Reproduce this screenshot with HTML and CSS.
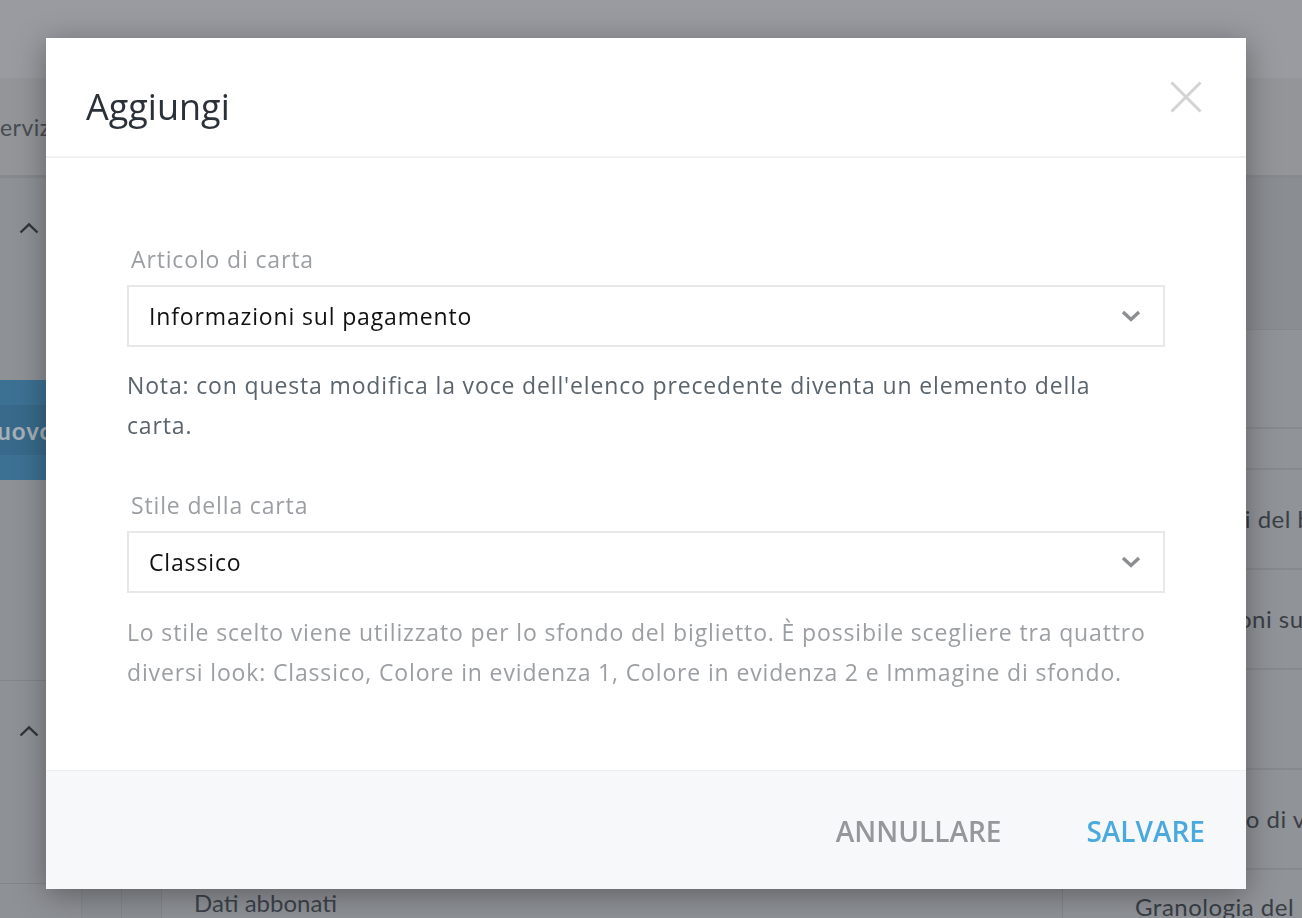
FILE: index.html
```html
<!DOCTYPE html>
<html lang="it">
<head>
<meta charset="utf-8">
<title>Aggiungi</title>
<link rel="stylesheet" href="styles.css">
</head>
<body>
<div class="page">
  <header class="topbar"></header>
  <nav class="subbar"><span class="tab">Servizi</span></nav>
  <div class="content">
    <aside class="sidebar">
      <section class="side-sec first">
        <div class="side-head">
          <svg class="chev-up" width="20" height="12" viewBox="0 0 20 12"><path d="M1.5 10.5 L10 2.5 L18.5 10.5" fill="none" stroke="#30353c" stroke-width="2.4"/></svg>
        </div>
        <div class="new-btn">Nuovo</div>
      </section>
      <section class="side-sec second">
        <div class="side-head">
          <svg class="chev-up" width="20" height="12" viewBox="0 0 20 12"><path d="M1.5 10.5 L10 2.5 L18.5 10.5" fill="none" stroke="#30353c" stroke-width="2.4"/></svg>
        </div>
      </section>
    </aside>
    <main class="center">
      <div class="table-row">
        <div class="cell narrow"></div>
        <div class="cell narrow"></div>
        <div class="cell text">Dati abbonati</div>
      </div>
    </main>
    <aside class="rightpanel">
      <div class="rp-head"></div>
      <div class="rp-row tall"></div>
      <div class="rp-row short"></div>
      <div class="rp-row indent-a">Documenti del biglietto</div>
      <div class="rp-row">Informazioni sul pagamento</div>
      <div class="rp-row"></div>
      <div class="rp-row indent-b">Documento di viaggio</div>
      <div class="rp-row last">Granologia del biglietto</div>
    </aside>
  </div>
</div>

<div class="modal">
  <div class="modal-header">
    <h2 class="modal-title">Aggiungi</h2>
    <button class="close-btn" aria-label="Chiudi">
      <svg width="32" height="32" viewBox="0 0 32 32"><path d="M1.5 1.5 L30.5 30.5 M30.5 1.5 L1.5 30.5" stroke="#d3d3d3" stroke-width="3" fill="none"/></svg>
    </button>
  </div>
  <div class="modal-body">
    <label class="field-label">Articolo di carta</label>
    <div class="select">
      <span class="select-value">Informazioni sul pagamento</span>
      <svg class="select-chev" width="20" height="12" viewBox="0 0 20 12"><path d="M2 2 L10 9.5 L18 2" fill="none" stroke="#8d8e92" stroke-width="3.4"/></svg>
    </div>
    <p class="note">Nota: con questa modifica la voce dell'elenco precedente diventa un elemento della carta.</p>

    <label class="field-label second">Stile della carta</label>
    <div class="select">
      <span class="select-value">Classico</span>
      <svg class="select-chev" width="20" height="12" viewBox="0 0 20 12"><path d="M2 2 L10 9.5 L18 2" fill="none" stroke="#8d8e92" stroke-width="3.4"/></svg>
    </div>
    <p class="help">Lo stile scelto viene utilizzato per lo sfondo del biglietto. È possibile scegliere tra quattro diversi look: Classico, Colore in evidenza 1, Colore in evidenza 2 e Immagine di sfondo.</p>
  </div>
  <div class="modal-footer">
    <button class="btn cancel">ANNULLARE</button>
    <button class="btn save">SALVARE</button>
  </div>
</div>
</body>
</html>
```

FILE: styles.css
```css
* { box-sizing: border-box; }
html, body { margin: 0; padding: 0; }
body {
  width: 1302px;
  height: 918px;
  overflow: hidden;
  background: #909398;
  font-family: "Lato", "Open Sans", sans-serif;
}

/* ---------- background page (dimmed) ---------- */
.page { display: flex; flex-direction: column; height: 918px; overflow: hidden; }
.topbar { height: 78px; background: #999ba0; flex: none; }
.subbar {
  height: 100px;
  flex: none;
  background: #939599;
  border-bottom: 3px solid #86898e;
  display: flex;
  align-items: center;
}
.tab {
  margin-left: -13px;
  font-size: 23px;
  color: #474c53;
  letter-spacing: 0.5px;
}
.content { flex: 1; display: flex; min-height: 0; }
.sidebar {
  width: 82px;
  flex: none;
  background: #8e9196;
  border-right: 1px solid #868990;
}
.side-sec { border-bottom: 1px solid #82858a; }
.side-sec.first { height: 503px; }
.side-sec.second { height: 203px; }
.side-head { height: 100px; display: flex; align-items: center; padding-left: 19px; }
.new-btn {
  margin-top: 102px;
  height: 100px;
  width: 160px;
  background: linear-gradient(#3d7194 0, #3d7194 25px, #396a8b 25px, #396a8b 75px, #3d7194 75px);
  color: #a6b0b8;
  font-size: 24px;
  font-weight: 700;
  letter-spacing: 1px;
  display: flex;
  align-items: center;
  text-indent: -22px;
}
.center { flex: 1; min-width: 0; display: flex; flex-direction: column; background: #8f9297; }
.table-row {
  margin-top: auto;
  height: 48px;
  display: flex;
  border-top: 1px solid #85888d;
}
.cell { height: 100%; }
.cell.narrow { width: 40px; border-right: 1px solid #84878c; background: #8c8f94; }
.cell.text {
  padding-left: 32px;
  font-size: 24px;
  color: #3d424a;
  display: flex;
  align-items: flex-end;
  line-height: 30px;
}
.rightpanel {
  width: 240px;
  min-width: 0;
  flex: none;
  background: #909398;
  border-left: 1px solid #84878c;
  overflow: hidden;
}
.rp-head { height: 152px; background: #8a8d92; border-bottom: 1px solid #85888d; }
.rp-row {
  height: 100px;
  border-bottom: 2px solid #86898e;
  line-height: 98px;
  padding-left: 72px;
  overflow: hidden;
  white-space: nowrap;
  font-size: 24px;
  color: #3a3f46;
  letter-spacing: 0.5px;
}
.rp-row.indent-a { padding-left: 67px; }
.rp-row.indent-b { padding-left: 68px; }
.rp-row.tall { height: 99px; line-height: 97px; }
.rp-row.short { height: 41px; line-height: 39px; }
.rp-row.last { border-bottom: none; line-height: 30px; padding-top: 22px; }

/* ---------- modal ---------- */
.modal {
  position: fixed;
  left: 46px;
  top: 38px;
  width: 1200px;
  background: #fff;
  box-shadow: 0 6px 30px rgba(0, 0, 0, 0.35);
  font-family: "Open Sans", "Noto Sans", sans-serif;
}
.modal-header {
  height: 120px;
  border-bottom: 2px solid #f1f1f2;
  display: flex;
  align-items: center;
  justify-content: space-between;
  padding: 0 44px 0 40px;
}
.modal-title {
  margin: 0;
  padding-top: 18px;
  font-size: 36px;
  font-weight: 400;
  color: #2b3138;
}
.close-btn {
  background: none;
  border: 0;
  padding: 0;
  width: 32px;
  height: 32px;
  display: flex;
}
.modal-body { padding: 86px 81px 78px; }
.field-label {
  display: block;
  margin-left: 4px;
  height: 30px;
  line-height: 30px;
  font-size: 23px;
  letter-spacing: 0.85px;
  color: #9b9ea2;
  margin-bottom: 11px;
}
.field-label.second { margin-top: 45px; }
.select {
  height: 62px;
  border: 2px solid #e8e8e9;
  display: flex;
  align-items: center;
  justify-content: space-between;
  padding: 0 22px 0 20px;
}
.select-value { font-size: 23px; letter-spacing: 0.85px; color: #111; }
.select-chev { display: block; }
.note, .help {
  margin: 18px 0 0;
  padding-right: 14px;
  font-size: 23px;
  letter-spacing: 0.85px;
  line-height: 40px;
}
.note { color: #5a646d; }
.help { color: #9b9ea2; margin-top: 19px; }
.modal-footer {
  height: 119px;
  background: #f7f8fa;
  border-top: 1px solid #eeeff1;
  display: flex;
  align-items: center;
  justify-content: flex-end;
  gap: 85px;
  padding-right: 41px;
}
.btn {
  background: none;
  border: 0;
  padding: 0;
  font-family: "Open Sans", sans-serif;
  font-size: 28px;
  font-weight: 600;
  margin-top: 2px;
}
.btn.cancel { color: #96979b; }
.btn.save { color: #4aa9de; }
```
